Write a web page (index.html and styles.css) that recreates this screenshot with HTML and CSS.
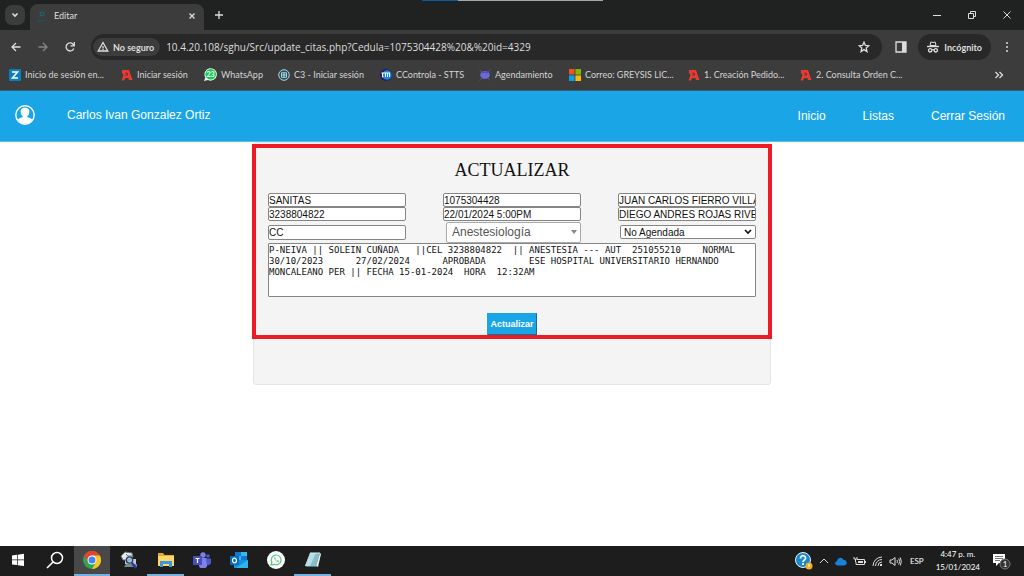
FILE: index.html
```html
<!DOCTYPE html>
<html lang="es">
<head>
<meta charset="utf-8">
<title>Editar</title>
<link rel="stylesheet" href="styles.css">
</head>
<body>
<svg class="defs" aria-hidden="true">
  <symbol id="mark-a" viewBox="0 0 12 12"><path d="M1 1h7L11.500 11H8L7.300 9H4.200L3 11.500H.5L2.500 6 1 4z" fill="#e63b32"/><path d="M4.500 4h1.600l.6 2H4.500" fill="none" stroke="#53312f" stroke-width=".9"/></symbol>
</svg>
<div class="browser">
  <div class="tabstrip">
    <span class="progress" aria-hidden="true"></span>
    <button class="tab-search" aria-label="Buscar pestañas"><svg width="8" height="8" viewBox="0 0 8 8"><path d="M1.500 2.500 4 5l2.500-2.500" class="line bold"/></svg></button>
    <div class="tab">
      <svg width="12" height="12" viewBox="0 0 12 12"><circle cx="6" cy="4" r="2" fill="none" stroke="#1b6c7b"/><path d="M1 10.500h10" stroke="#1d5365"/><path d="M2 2h2M8 1h2M2 7h2" stroke="#24515c"/></svg>
      <span class="tab-title">Editar</span>
      <button class="bare" aria-label="Cerrar pestaña"><svg width="8" height="8" viewBox="0 0 8 8"><path d="m1.500 1.500 5 5m0-5-5 5" class="line"/></svg></button>
    </div>
    <button class="bare new-tab" aria-label="Nueva pestaña"><svg width="10" height="10" viewBox="0 0 10 10"><path d="M5 1v8M1 5h8" class="line"/></svg></button>
    <div class="window-buttons">
      <button class="bare" aria-label="Minimizar"><svg width="10" height="10" viewBox="0 0 10 10"><path d="M1 5.500h8" class="line thin"/></svg></button>
      <button class="bare" aria-label="Restaurar"><svg width="10" height="10" viewBox="0 0 10 10"><path d="M1.500 3.500h5v5h-5zM3.500 3V1.500h5v5H7" class="line thin"/></svg></button>
      <button class="bare" aria-label="Cerrar"><svg width="10" height="10" viewBox="0 0 10 10"><path d="m1.500 1.500 7 7m0-7-7 7" class="line thin"/></svg></button>
    </div>
  </div>

  <div class="toolbar">
    <div class="nav-buttons">
      <button class="bare" aria-label="Atrás"><svg width="12" height="12" viewBox="0 0 12 12"><path d="M10.500 6h-8M6 2 2 6l4 4" class="line"/></svg></button>
      <button class="bare dim" aria-label="Adelante"><svg width="12" height="12" viewBox="0 0 12 12"><path d="M1.500 6h8M6 2l4 4-4 4" class="line"/></svg></button>
      <button class="bare" aria-label="Recargar"><svg width="12" height="12" viewBox="0 0 12 12"><path d="M9.800 7.500A4 4 0 1 1 9 3.200L10 4.500M10.300 1v3.800H6.500" class="line"/></svg></button>
    </div>
    <div class="address">
      <button class="security"><svg width="12" height="12" viewBox="0 0 12 12"><path d="M6 1.500 1.200 10h9.600zM6 5v2.500M6 8v1" class="line"/></svg>No seguro</button>
      <input class="url" aria-label="Dirección" value="10.4.20.108/sghu/Src/update_citas.php?Cedula=1075304428%20&amp;%20id=4329">
      <button class="bare" aria-label="Añadir a favoritos"><svg width="12" height="12" viewBox="0 0 12 12"><path d="m6 1.200 1.400 3.200 3.500.3-2.700 2.300.8 3.500-3-1.900-3 1.900.8-3.500L1.100 4.700l3.500-.3z" class="line"/></svg></button>
    </div>
    <button class="bare panel" aria-label="Panel lateral"><svg width="12" height="12" viewBox="0 0 12 12"><path d="M1 1h10v10H1z" class="line"/><path d="M7 1h4v10H7z" fill="#ddd"/></svg></button>
    <button class="incognito"><svg width="14" height="14" viewBox="0 0 14 14"><path d="M4 5.500 4.800 2 7 2.500 9.200 2l.8 3.500z" fill="none" stroke="#ddd"/><path d="M1 5.800h12v1.400H1z" fill="#ddd"/><circle cx="4.200" cy="10.300" r="1.700" class="line"/><circle cx="9.800" cy="10.300" r="1.700" class="line"/><path d="M6 10q1-.7 2 0" class="line"/></svg>Incógnito</button>
    <button class="bare menu" aria-label="Menú"><svg width="10" height="12" viewBox="0 0 10 12" fill="#ddd"><circle cx="5" cy="2" r="1"/><circle cx="5" cy="6" r="1"/><circle cx="5" cy="10" r="1"/></svg></button>
  </div>

  <nav class="bookmarks" aria-label="Marcadores">
    <a href="#"><svg width="12" height="12" viewBox="0 0 12 12"><rect width="12" height="12" rx="1" fill="#087fc1"/><path d="M3 3h5.500L3.500 9H9" fill="none" stroke="#fff" stroke-width="1.600"/></svg>Inicio de sesión en...</a>
    <a href="#"><svg width="12" height="12"><use href="#mark-a"/></svg>Iniciar sesión</a>
    <a href="#"><svg width="13" height="13" viewBox="0 0 13 13"><path d="m0 13 1.300-3.500A6.200 6.200 0 1 1 4 12z" fill="#e6f8ec"/><circle cx="6.700" cy="6.300" r="5.300" fill="#16c653"/><text x="6.500" y="9" class="badge-text">23</text></svg>WhatsApp</a>
    <a href="#"><svg width="12" height="12" viewBox="0 0 12 12"><circle cx="6" cy="6" r="5.300" fill="#1d5667" stroke="#b9d1d6"/><path d="M3.500 3.800h5v4.500h-5zM6 3.500v5M4 6h4" fill="none" stroke="#dce9eb" stroke-width=".8"/></svg>C3 - Iniciar sesión</a>
    <a href="#"><svg width="12" height="12" viewBox="0 0 12 12"><circle cx="6" cy="6" r="6" fill="#2a1770"/><circle cx="7" cy="6" r="4.700" fill="#1688d5"/><path d="M1.500 4H10M2.500 4v4h1M5.500 4v4M7.500 4v4M9.500 4v4" fill="none" stroke="#fff"/></svg>CControla - STTS</a>
    <a href="#"><svg width="12" height="12" viewBox="0 0 12 12"><path d="m.5.5 11 11m0-11-11 11" stroke="#56518f"/><ellipse cx="6" cy="6" rx="4.800" ry="4" fill="#6969d7"/><path d="M3 4q3-2 6 0" fill="none" stroke="#4d49a6"/></svg>Agendamiento</a>
    <a href="#"><svg width="12" height="12" viewBox="0 0 12 12"><path d="M0 0h5.600v5.600H0z" fill="#f25022"/><path d="M6.400 0H12v5.600H6.400z" fill="#7fba00"/><path d="M0 6.400h5.600V12H0z" fill="#00a4ef"/><path d="M6.400 6.400H12V12H6.400z" fill="#ffb900"/></svg>Correo: GREYSIS LIC...</a>
    <a href="#"><svg width="12" height="12"><use href="#mark-a"/></svg>1. Creación Pedido...</a>
    <a href="#"><svg width="12" height="12"><use href="#mark-a"/></svg>2. Consulta Orden C...</a>
    <button class="bare more" aria-label="Más marcadores"><svg width="10" height="10" viewBox="0 0 10 10"><path d="m1.500 2 3 3-3 3m4-6 3 3-3 3" class="line"/></svg></button>
  </nav>
</div>

<header class="site-header">
  <svg width="20" height="20" viewBox="0 0 20 20"><circle cx="10" cy="10" r="9.200" fill="none" stroke="#fff" stroke-width="1.400"/><path d="M10 2.800c3.300 0 4.600 2 4.300 4.700-.2 1.800-1 3-2 3.700v1c1.800.5 3.800.9 4.900 2.200a8.300 8.300 0 0 1-14.400 0c1.100-1.300 3.100-1.700 4.900-2.200v-1c-1-.7-1.800-1.900-2-3.700C5.400 4.800 6.700 2.800 10 2.800z" fill="#fff"/></svg>
  <span class="user">Carlos Ivan Gonzalez Ortiz</span>
  <nav class="site-nav"><a href="#">Inicio</a><a href="#">Listas</a><a href="#">Cerrar Sesión</a></nav>
</header>

<main class="content">
  <form class="card">
    <h1>ACTUALIZAR</h1>
    <div class="fields">
      <input aria-label="Entidad" value="SANITAS">
      <input aria-label="Cédula" value="1075304428">
      <input aria-label="Paciente" value="JUAN CARLOS FIERRO VILLALBA">
      <input aria-label="Teléfono" value="3238804822">
      <input aria-label="Fecha" value="22/01/2024 5:00PM">
      <input aria-label="Médico" value="DIEGO ANDRES ROJAS RIVERA">
    </div>
    <div class="fields last">
      <input aria-label="Tipo de documento" value="CC">
      <div class="picker specialty"><select aria-label="Especialidad"><option>Anestesiología</option></select><svg width="6" height="4" viewBox="0 0 6 4"><path d="M0 0h6L3 4z" fill="#888"/></svg></div>
      <div class="picker status"><select aria-label="Estado"><option>No Agendada</option></select><svg width="8" height="6" viewBox="0 0 8 6"><path d="m1 1 3 3 3-3" fill="none" stroke="#111" stroke-width="1.700"/></svg></div>
    </div>
    <textarea aria-label="Observaciones">P-NEIVA || SOLEIN CUÑADA   ||CEL 3238804822  || ANESTESIA --- AUT  251055210    NORMAL
30/10/2023      27/02/2024      APROBADA        ESE HOSPITAL UNIVERSITARIO HERNANDO
MONCALEANO PER || FECHA 15-01-2024  HORA  12:32AM</textarea>
    <button type="button" class="submit">Actualizar</button>
    <span class="highlight" aria-hidden="true"></span>
  </form>
</main>

<footer class="taskbar">
  <div class="apps">
    <button aria-label="Inicio"><svg width="14" height="14" viewBox="0 0 14 14" fill="#fff"><path d="m1 2.500 5-.7v4.700H1zM6.700 1.700 13 .8v5.700H6.700zM1 7.200h5v4.900l-5-.7zM6.700 7.200H13v5.900l-6.300-.9z"/></svg></button>
    <button aria-label="Buscar"><svg width="18" height="18" viewBox="0 0 18 18"><circle cx="11" cy="7" r="5.500" fill="none" stroke="#fff" stroke-width="1.500"/><path d="m7 11-6 6" stroke="#fff" stroke-width="1.600"/></svg></button>
    <button class="active" aria-label="Chrome"><svg width="18" height="18" viewBox="0 0 18 18"><circle cx="9" cy="9" r="9" fill="#31a451"/><path d="M1.200 4.500A9 9 0 0 1 16.800 4.500H9L5.100 11.300z" fill="#e44335"/><path d="M16.800 4.500A9 9 0 0 1 9 18l3.900-6.800L9 4.500z" fill="#fbc421"/><circle cx="9" cy="9" r="4.500" fill="#fff"/><circle cx="9" cy="9" r="3.500" fill="#4285f4"/></svg></button>
    <button aria-label="Visor"><svg width="18" height="18" viewBox="0 0 18 18"><path d="M5 8h11v5H5z" fill="#c6c9c6"/><path d="M6 13h11v3H4z" fill="#7f8987"/><path d="m1 5 4-4 7 1 1 4-4 3-6 0z" fill="#e8e8e4" stroke="#657173"/><path d="M6 3l2 2h4" fill="none" stroke="#777"/><circle cx="9.500" cy="9" r="3.200" fill="#83c5ca" fill-opacity=".7" stroke="#213b77" stroke-width="1.300"/><path d="m12 12 4 5" stroke="#2438a8" stroke-width="2.500"/></svg></button>
    <button class="open" aria-label="Archivos"><svg width="18" height="16" viewBox="0 0 18 16"><path d="M1 1h5l1.500 2H17v11H1z" fill="#e9a72c"/><path d="M1 4h16v10H1z" fill="#ffd766"/><path d="M3 9h12v6h-3v-3H6v3H3z" fill="#3b96dc"/></svg></button>
    <button aria-label="Teams"><svg width="18" height="16" viewBox="0 0 18 16"><circle cx="10" cy="3" r="2.700" fill="#7b83eb"/><circle cx="15" cy="4" r="1.800" fill="#5059c9"/><path d="M6 6h8v5a4 4 0 0 1-8 3z" fill="#7b83eb"/><path d="M13 6.500h5V10a3 3 0 0 1-4 3z" fill="#5059c9"/><path d="M0 4h9v9H0z" fill="#464eb8"/><path d="M2.500 6.500h4m-2 0V11" stroke="#fff" stroke-width="1.200"/></svg></button>
    <button aria-label="Outlook"><svg width="18" height="16" viewBox="0 0 18 16"><path d="M5 0h12v9H5z" fill="#0f78d4"/><path d="M11 0h6v4h-6zM5 4h6v4H5z" fill="#35b8f1"/><path d="M4 8h14v8H4z" fill="#1591df"/><path d="M18 8v8H6z" fill="#33b3ee"/><path d="M0 4h9v9H0z" fill="#086abf"/><ellipse cx="4.500" cy="8.500" rx="2" ry="2.300" fill="none" stroke="#fff" stroke-width="1.200"/></svg></button>
    <button aria-label="WhatsApp"><svg width="18" height="18" viewBox="0 0 18 18"><circle cx="9" cy="9" r="9" fill="#fff"/><path d="m4 14 .9-2.700A4.900 4.900 0 1 1 7 13.300z" fill="none" stroke="#4fca79" stroke-width="1.200"/><path d="M7.300 6.500c0 2.500 2 4.300 4 4.500l.7-1-1.500-.8-.7.700-1.700-1.700.7-.6L8 6z" fill="#3fbd68"/></svg></button>
    <button class="open" aria-label="Bloc de notas"><svg width="18" height="16" viewBox="0 0 18 16"><path d="M6 1h10l-4 13H1z" fill="#82bfca"/><path d="M6 1h6L6 14H1z" fill="#b9dde0"/><path d="M16 1l1 1-3 13-2-1z" fill="#eee"/><path d="m1 14 11 0 2 1H3z" fill="#477b89"/><path d="M6 1h10" stroke="#e5eeee"/></svg></button>
  </div>
  <div class="tray">
    <svg width="18" height="18" viewBox="0 0 18 18"><circle cx="8" cy="8" r="7.500" fill="#1689d2" stroke="#eee"/><path d="M5.500 6.500c0-4 5.500-3.400 5 0C10.300 8 8 8 8 10M8 11v2" fill="none" stroke="#fff" stroke-width="1.700"/><circle cx="14" cy="14" r="3.500" fill="#f5ad24"/><path d="M14 12v3" stroke="#fff"/></svg>
    <svg width="10" height="8" viewBox="0 0 10 8"><path d="m1 6 4-4 4 4" class="line thin"/></svg>
    <svg width="12" height="9" viewBox="0 0 12 9"><path d="M3 8.500C-1 8-.3 4.500 2 4.200 2.500.5 7-.5 8.500 3 12 2.500 13 7.500 9.500 8.500z" fill="#1682da"/></svg>
    <svg width="13" height="10" viewBox="0 0 13 10"><path d="M4 3.500h7.500v5H3V6M1 1v2h3V1M2.500 3v3" class="line thin"/><path d="M5 5h5v2H5zM12 5h1v2h-1z" fill="#ddd"/></svg>
    <svg width="11" height="11" viewBox="0 0 11 11"><path d="M1 10a9 9 0 0 1 9-9M3.500 10A6.500 6.500 0 0 1 10 3.500M6 10a4 4 0 0 1 4-4" class="line thin"/><path d="M8 8h2v2H8z" fill="#ddd"/></svg>
    <svg width="13" height="11" viewBox="0 0 13 11"><path d="M1 4v3h2l3 2.500v-8L3 4zM8 4q1 1.500 0 3M9.700 2.500q2 3 0 6M11.300 1.500q2 4 0 8" class="line thin"/></svg>
    <span class="lang">ESP</span>
    <time class="clock"><span>4:47 p. m.</span><span>15/01/2024</span></time>
    <svg width="20" height="18" viewBox="0 0 20 18"><path d="M1 2h12v9H7l-3 3v-3H1z" fill="#fff"/><path d="M3 4.500h8M3 6.500h8M3 8.500h5" stroke="#555" stroke-width=".8"/><circle cx="13" cy="12" r="5" fill="#333" stroke="#777"/><text x="13" y="15" class="notice-count">1</text></svg>
  </div>
</footer>
</body>
</html>
```

FILE: styles.css
```css
* { box-sizing: border-box; }

body {
  margin: 0;
  min-height: 100vh;
  display: flex;
  flex-direction: column;
  background: #fff;
  font-family: "Liberation Sans", Arial, sans-serif;
}

svg { display: block; flex: none; }
button, input, select, textarea { margin: 0; font: inherit; color: inherit; }
a { color: inherit; text-decoration: none; }

.defs { position: absolute; width: 0; height: 0; }
.line { fill: none; stroke: #ddd; stroke-width: 1.3; }
.line.bold { stroke-width: 1.6; }
.line.thin { stroke-width: 1; }
.bare { display: flex; padding: 0; border: 0; background: none; }
.dim { opacity: .45; }

/* Browser window */
.browser {
  background: #3c3c3c;
  color: #dedede;
  font-family: Lato, "Open Sans", sans-serif;
  font-size: 9px;
  border-bottom: 1px solid #365f73;
}

.tabstrip {
  position: relative;
  display: flex;
  align-items: center;
  height: 30px;
  padding: 0 12px 0 5px;
  background: #202222;
}
.progress {
  position: absolute;
  top: 0;
  left: 422px;
  width: 181px;
  height: 1px;
  background: linear-gradient(90deg, #075b9d 20%, #a4a8a8 20%);
}
.tab-search {
  display: flex;
  align-items: center;
  justify-content: center;
  width: 20px;
  height: 20px;
  margin-right: 5px;
  padding: 0;
  border: 0;
  border-radius: 7px;
  background: #3c3c3c;
}
.tab {
  display: flex;
  align-items: center;
  align-self: flex-end;
  gap: 6px;
  width: 174px;
  height: 26px;
  padding: 0 8px 3px 6px;
  border-radius: 8px 8px 0 0;
  background: #3c3c3c;
}
.tab-title { flex: 1; }
.new-tab { margin-left: 10px; }
.window-buttons { display: flex; gap: 25px; margin-left: auto; }

.toolbar {
  display: flex;
  align-items: center;
  height: 34px;
  padding: 0 12px 0 10px;
}
.nav-buttons { display: flex; gap: 15px; margin-right: 15px; }
.address {
  display: flex;
  align-items: center;
  flex: 1;
  height: 26px;
  padding: 0 12px 0 2px;
  border-radius: 13px;
  background: #282828;
}
.security {
  display: flex;
  align-items: center;
  gap: 4px;
  height: 18px;
  padding: 0 6px 0 4px;
  border: 0;
  border-radius: 9px;
  background: #3c3c3c;
  font-weight: 700;
  white-space: nowrap;
}
.url {
  flex: 1;
  min-width: 0;
  padding: 0 6px;
  border: 0;
  background: none;
  font-family: "Open Sans", "Noto Sans", sans-serif;
  font-size: 10px;
}
.panel { margin: 0 11px 0 13px; }
.incognito {
  display: flex;
  align-items: center;
  gap: 4px;
  height: 26px;
  padding: 0 9px 0 8px;
  border: 0;
  border-radius: 13px;
  background: #282828;
  font-weight: 700;
}
.menu { margin-left: 11px; }

.bookmarks {
  display: grid;
  grid-template-columns: 112px 83px 74px 102px 99px 90px 119px 112px 1fr 10px;
  align-items: center;
  height: 26px;
  padding: 0 20px 5px 9px;
  color: #d4d4d4;
}
.bookmarks a { display: flex; align-items: center; gap: 4px; white-space: nowrap; }
.badge-text { fill: #fff; font-size: 7px; font-weight: 700; text-anchor: middle; }

/* Site header */
.site-header {
  display: flex;
  align-items: center;
  height: 51px;
  padding: 0 19px 3px 15px;
  border-bottom: 1px solid #5bbdeb;
  background: #1aa5e7;
  color: #fff;
  font-size: 12px;
}
.user { margin-left: 32px; }
.site-nav { display: flex; gap: 37px; margin-left: auto; padding-top: 2px; }

/* Form */
.content { flex: 1; }
.card {
  position: relative;
  max-width: 518px;
  min-height: 243px;
  margin: 0 auto;
  padding: 16px 14px;
  border: 1px solid #e5e5e5;
  border-radius: 3px;
  background: #f4f4f4;
  text-align: center;
}
.card h1 {
  margin: 0 0 12px;
  font-family: "Liberation Serif", "Times New Roman", serif;
  font-size: 18px;
  font-weight: 400;
  line-height: 22px;
  color: #111;
}
.fields {
  display: grid;
  grid-template-columns: repeat(3, 138px);
  justify-content: space-between;
  align-items: center;
}
.fields.last { height: 22px; }
.fields input {
  width: 100%;
  min-width: 0;
  height: 15px;
  padding: 0;
  border: 1px solid #858585;
  border-radius: 2px;
  background: #fff;
  color: #111;
  font-size: 10px;
}
.fields:not(.last) input { height: 14px; }

.picker { position: relative; justify-self: end; }
.picker select {
  display: block;
  width: 100%;
  height: 100%;
  appearance: none;
  border: 1px solid #858585;
  border-radius: 2px;
  background: #fff;
  color: #111;
  font-size: 10px;
  padding: 0 3px;
}
.picker svg { position: absolute; right: 4px; top: 50%; transform: translateY(-50%); pointer-events: none; }
.specialty { width: 135px; height: 21px; }
.specialty select { padding: 0 5px; border-color: #aaa; color: #555; font-size: 12px; }
.status { width: 136px; height: 14px; }

.card textarea {
  display: block;
  width: 100%;
  height: 54px;
  padding: 1px 0;
  border: 1px solid #858585;
  border-radius: 1px;
  resize: none;
  overflow: hidden;
  background: #fff;
  color: #111;
  font-family: "DejaVu Sans Mono", monospace;
  font-size: 9px;
  line-height: 11px;
}
.submit {
  height: 22px;
  margin-top: 16px;
  padding: 0 2px;
  border: 1px solid #1aa5e7;
  border-right-color: #176d94;
  border-bottom-color: #176d94;
  background: #1aa5e7;
  color: #fff;
  font-size: 9px;
  font-weight: 700;
}
.highlight {
  position: absolute;
  inset: 1px -2px 45px;
  border: 4px solid #ed1c24;
  pointer-events: none;
}

/* Taskbar */
.taskbar {
  display: flex;
  justify-content: space-between;
  height: 30px;
  background: #1d1d1d;
  color: #fff;
  font-family: Lato, "Open Sans", sans-serif;
}
.apps { display: flex; width: 331px; }
.apps button {
  display: flex;
  align-items: center;
  justify-content: center;
  flex: 1;
  padding: 0;
  border: 0;
  border-bottom: 2px solid transparent;
  background: none;
}
.apps .open { border-bottom-color: #76b0df; }
.apps .active { border-bottom-color: #76b0df; background: #484848; }
.tray { display: flex; align-items: center; gap: 6px; padding-right: 12px; font-size: 8px; }
.lang { margin-left: 2px; }
.clock { display: flex; flex-direction: column; align-items: center; margin: 0 6px; line-height: 13px; }
.notice-count { fill: #fff; font-size: 8px; text-anchor: middle; }
```
